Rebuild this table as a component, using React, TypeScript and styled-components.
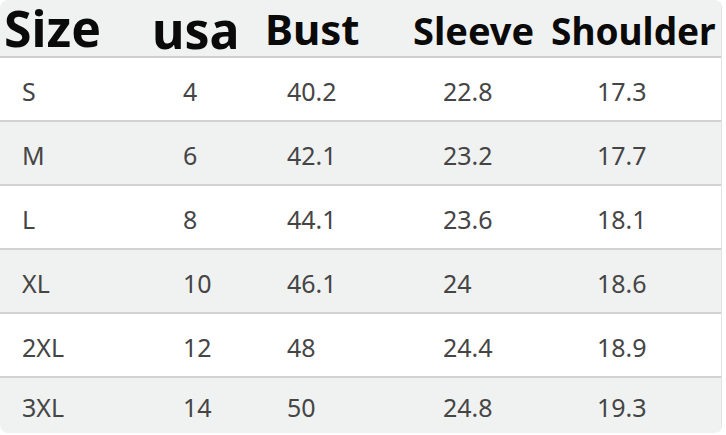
import styled, { createGlobalStyle } from "styled-components";

const GlobalStyle = createGlobalStyle`
  html, body {
    margin: 0;
    padding: 0;
    background: #ffffff;
  }
`;

const STable = styled.div`
  width: 722px;
  height: 433px;
  border-radius: 8px;
  overflow: hidden;
  border-right: 1px solid #e2e2e2;
  box-sizing: border-box;
  display: flex;
  flex-direction: column;
`;

const SHead = styled.div`
  display: grid;
  grid-template-columns: 148px 113px 148px 138px 1fr;
  padding-left: 4px;
  height: 58px;
  box-sizing: border-box;
  background: #f0f1f1;
  border-bottom: 2px solid #cfcfcf;
`;

const SHeadCell = styled.div<{ $size: number; $top: number }>`
  font-family: "Noto Sans", "Open Sans", sans-serif;
  font-weight: 700;
  font-size: ${(props) => props.$size}px;
  line-height: 1;
  padding-top: ${(props) => props.$top}px;
  color: #0a0a0a;
  white-space: nowrap;
`;

const SRow = styled.div<{ $shade: boolean; $last: boolean }>`
  display: grid;
  grid-template-columns: 161px 104px 156px 154px 1fr;
  align-items: center;
  padding-left: 22px;
  flex: ${(props) => (props.$last ? "1" : "0 0 64px")};
  box-sizing: border-box;
  background: ${(props) => (props.$shade ? "#f0f1f1" : "#ffffff")};
  border-bottom: ${(props) => (props.$last ? "none" : "2px solid #d2d2d2")};
`;

const SCell = styled.span`
  font-family: "Noto Sans", "Open Sans", sans-serif;
  font-size: 25px;
  color: #454545;
  line-height: 1;
  padding-top: 4px;
`;

const heads = [
  { label: "Size", size: 50, top: 3 },
  { label: "usa", size: 50, top: 5 },
  { label: "Bust", size: 42, top: 8 },
  { label: "Sleeve", size: 38, top: 11 },
  { label: "Shoulder", size: 37, top: 12 },
];

const rows = [
  ["S", "4", "40.2", "22.8", "17.3"],
  ["M", "6", "42.1", "23.2", "17.7"],
  ["L", "8", "44.1", "23.6", "18.1"],
  ["XL", "10", "46.1", "24", "18.6"],
  ["2XL", "12", "48", "24.4", "18.9"],
  ["3XL", "14", "50", "24.8", "19.3"],
];

function App() {
  return (
    <>
      <GlobalStyle />
      <STable>
        <SHead>
          {heads.map((h) => (
            <SHeadCell key={h.label} $size={h.size} $top={h.top}>
              {h.label}
            </SHeadCell>
          ))}
        </SHead>
        {rows.map((r, i) => (
          <SRow key={r[0]} $shade={i % 2 === 1} $last={i === rows.length - 1}>
            {r.map((v, j) => (
              <SCell key={j}>{v}</SCell>
            ))}
          </SRow>
        ))}
      </STable>
    </>
  );
}

export default App;
